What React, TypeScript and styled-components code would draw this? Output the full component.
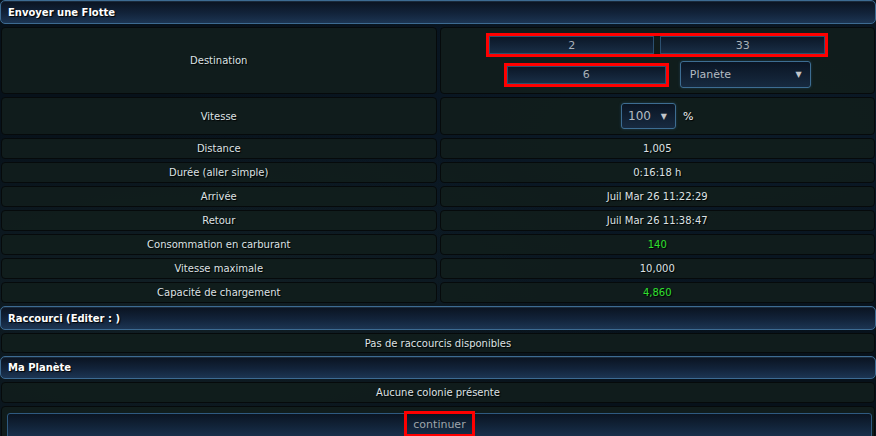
import React from "react";
import styled, { createGlobalStyle } from "styled-components";

const GlobalStyle = createGlobalStyle`
  html, body {
    margin: 0;
    padding: 0;
    height: 100%;
    overflow: hidden;
  }
  body {
    background:
      radial-gradient(ellipse at 22% 70%, rgba(40, 62, 60, 0.35) 0%, rgba(0, 0, 0, 0) 45%),
      radial-gradient(ellipse at 80% 30%, rgba(20, 45, 70, 0.35) 0%, rgba(0, 0, 0, 0) 55%),
      #07111a;
    font-family: "DejaVu Sans", Verdana, sans-serif;
    font-size: 10px;
    color: #dde2e4;
  }
`;

// ---------------------------------------------
// Layout
// ---------------------------------------------
const Board = styled.div`
  display: grid;
  grid-template-columns: 1fr 1fr;
  gap: 3px;
  padding: 0 1px;
  width: 876px;
  box-sizing: border-box;
`;

const SectionHeader = styled.div`
  grid-column: 1 / -1;
  margin: 0 -1px;
  height: ${(props) => props.$h || 24}px;
  box-sizing: border-box;
  display: flex;
  align-items: center;
  padding-left: 7px;
  border: 1px solid #3d6b92;
  border-radius: 5px;
  background: linear-gradient(to bottom, #0a1320 0%, #12233a 55%, #1c3553 100%);
  box-shadow: inset 0 1px 0 rgba(120, 170, 210, 0.15);
  font-weight: bold;
  color: #ffffff;
  text-shadow: 1px 1px 1px #000;
`;

const Cell = styled.div`
  grid-column: ${(props) => (props.$wide ? "1 / -1" : "auto")};
  height: ${(props) => props.$h || 21}px;
  box-sizing: border-box;
  display: flex;
  flex-direction: ${(props) => (props.$stack ? "column" : "row")};
  align-items: center;
  justify-content: center;
  gap: ${(props) => (props.$stack ? "4px" : "7px")};
  border: 1px solid #060a0b;
  border-radius: 4px;
  background: rgba(17, 29, 28, 0.96);
  color: ${(props) => (props.$green ? "#2fe02f" : "#dde2e4")};
  text-shadow: 1px 1px 1px #000;
`;

const ButtonCell = styled(Cell)`
  height: 40px;
  align-items: flex-start;
  justify-content: stretch;
  padding: 6px 2px 0 5px;
`;

// ---------------------------------------------
// Controls
// ---------------------------------------------
const ControlRow = styled.div`
  display: flex;
  align-items: center;
  gap: ${(props) => props.$gap || 0}px;
`;

const RedFrame = styled.div`
  display: flex;
  gap: 6px;
  border: 3px solid #ff0000;
`;

const Field = styled.div`
  width: ${(props) => props.$w}px;
  height: 18px;
  box-sizing: border-box;
  display: flex;
  align-items: center;
  justify-content: center;
  border: 1px solid #2c5070;
  background: linear-gradient(to bottom, #0b1727 0%, #192e46 100%);
  color: #a9b1b8;
  font-size: 11px;
  text-shadow: none;
`;

const Select = styled.div`
  width: ${(props) => props.$w}px;
  height: ${(props) => props.$h}px;
  box-sizing: border-box;
  display: flex;
  align-items: center;
  justify-content: space-between;
  padding: 0 8px 0 ${(props) => props.$pl || 9}px;
  border: 1px solid #3d6d92;
  border-radius: 3px;
  background: linear-gradient(to bottom, #0a1524 0%, #172a40 100%);
  box-shadow: 0 0 3px rgba(60, 120, 170, 0.35);
  color: #b4bcc2;
  font-size: ${(props) => props.$fs || 11}px;
  text-shadow: none;
`;

const Arrow = styled.span`
  font-size: 8px;
  color: #c2c6ca;
`;

const Percent = styled.span`
  font-size: 11px;
  color: #eef1f3;
`;

const SubmitBar = styled.div`
  flex: 1;
  height: 26px;
  box-sizing: border-box;
  display: flex;
  align-items: center;
  justify-content: center;
  border: 1px solid #2f5a80;
  border-radius: 3px;
  background: linear-gradient(to bottom, #0a1422 0%, #13263d 60%, #1a324e 100%);
`;

const SubmitLabel = styled.span`
  height: 26px;
  box-sizing: border-box;
  margin-top: -4px;
  display: flex;
  align-items: center;
  padding: 0 6px;
  border: 3px solid #ff0000;
  color: #9ea5ab;
  font-size: 11px;
  text-shadow: none;
`;

const rows = [
  { label: "Distance", value: "1,005" },
  { label: "Durée (aller simple)", value: "0:16:18 h" },
  { label: "Arrivée", value: "Juil Mar 26 11:22:29" },
  { label: "Retour", value: "Juil Mar 26 11:38:47" },
  { label: "Consommation en carburant", value: "140", green: true },
  { label: "Vitesse maximale", value: "10,000" },
  { label: "Capacité de chargement", value: "4,860", green: true },
];

export default function App() {
  return (
    <>
      <GlobalStyle />
      <Board>
        <SectionHeader>Envoyer une Flotte</SectionHeader>

        <Cell $h={67}>Destination</Cell>
        <Cell $h={67} $stack>
          <RedFrame>
            <Field $w={165}>2</Field>
            <Field $w={165}>33</Field>
          </RedFrame>
          <ControlRow $gap={11}>
            <RedFrame>
              <Field $w={159}>6</Field>
            </RedFrame>
            <Select $w={131} $h={27}>
              Planète
              <Arrow>▼</Arrow>
            </Select>
          </ControlRow>
        </Cell>

        <Cell $h={38}>Vitesse</Cell>
        <Cell $h={38}>
          <Select $w={55} $h={26} $pl={6} $fs={12}>
            100
            <Arrow>▼</Arrow>
          </Select>
          <Percent>%</Percent>
        </Cell>

        {rows.map((r) => (
          <React.Fragment key={r.label}>
            <Cell>{r.label}</Cell>
            <Cell $green={r.green}>{r.value}</Cell>
          </React.Fragment>
        ))}

        <SectionHeader $h={24}>Raccourci (Editer : )</SectionHeader>
        <Cell $wide $h={20}>Pas de raccourcis disponibles</Cell>

        <SectionHeader $h={23}>Ma Planète</SectionHeader>
        <Cell $wide>Aucune colonie présente</Cell>

        <ButtonCell $wide>
          <SubmitBar>
            <SubmitLabel>continuer</SubmitLabel>
          </SubmitBar>
        </ButtonCell>
      </Board>
    </>
  );
}
